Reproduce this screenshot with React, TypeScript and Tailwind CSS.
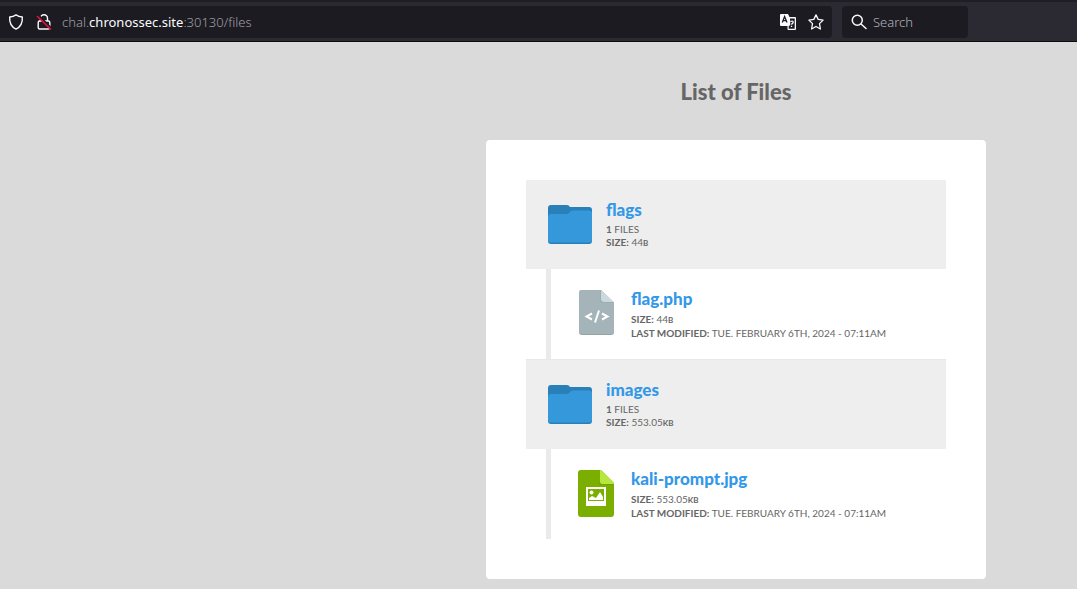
import React from "react";

type Entry = {
  name: string;
  kind: "folder" | "code" | "image";
  size: string;
  unit: string;
  count?: number;
  modified?: string;
};

const entries: Entry[] = [
  { name: "flags", kind: "folder", count: 1, size: "44", unit: "B" },
  { name: "flag.php", kind: "code", size: "44", unit: "B", modified: "Tue. February 6th, 2024 - 07:11am" },
  { name: "images", kind: "folder", count: 1, size: "553.05", unit: "KB" },
  { name: "kali-prompt.jpg", kind: "image", size: "553.05", unit: "KB", modified: "Tue. February 6th, 2024 - 07:11am" },
];

function FolderIcon() {
  return (
    <svg width="44" height="39" viewBox="0 0 44 39" aria-hidden="true">
      <path d="M3 0h16q2 0 3 2h19q3 0 3 3v31q0 3-3 3H3q-3 0-3-3V3q0-3 3-3z" fill="#2980b9" />
      <path d="M3 9h15q3 0 4-2 1-1.500 3-1.500h16q3 0 3 3v26q0 3-3 3H3q-3 0-3-3V12q0-3 3-3z" fill="#3498db" />
    </svg>
  );
}

function CodeIcon() {
  return (
    <svg width="36" height="47" viewBox="0 0 36 47" aria-hidden="true">
      <path d="M3 0h20l13 13v29q0 3-3 3H4q-3 0-3-3V3q0-3 3-3z" fill="#95a5a6" />
      <path d="M4 0h19l13 13v29q0 2-3 2H4q-3 0-3-2V3q0-3 3-3z" fill="#a5b4b9" />
      <path d="M23 0l13 12H26q-3 0-3-3z" fill="#cbd9df" />
      <path d="M23 9q0 3 3 3h10v1H25q-3 0-3-3V0h1z" fill="#95a6ad" opacity=".6" />
      <path d="M14 23.500L8.500 26.500l5.500 3M24 23.500l5.500 3-5.500 3M21 20.500l-4 12" fill="none" stroke="#fff" strokeWidth="2" />
    </svg>
  );
}

function ImageIcon() {
  return (
    <svg width="36" height="47" viewBox="0 0 36 47" aria-hidden="true">
      <path d="M3 0h20l13 13v31q0 3-3 3H3q-3 0-3-3V3q0-3 3-3z" fill="#7aaf00" />
      <path d="M22 0h1l13 13v1H24q-2 0-2-2z" fill="#b5e73c" />
      <path d="M22 12q0 2 2 2h12v1H24q-3 0-3-3z" fill="#659400" opacity=".4" />
      <path fillRule="evenodd" d="M8 17h20v19H8zM10 19v12h16V19z" fill="#fff" />
      <path d="M11 30v-2l3-2 4 2 4-6 3 5v3z" fill="#fff" />
      <circle cx="13.500" cy="22.500" r="2" fill="#fff" />
    </svg>
  );
}

function FileRow({ entry }: { entry: Entry }) {
  const folder = entry.kind === "folder";
  return (
    <li
      className={
        folder
          ? "flex border-t border-[#e8e8e8] bg-[#eeeeee] pb-5 pl-[22px] pt-5 first:border-t-0"
          : "ml-5 flex border-l-[5px] border-[#eaeae8] pb-5 pl-[27px] pt-[21px]"
      }
    >
      <div className={folder ? "w-[58px] shrink-0 pt-[5px]" : "w-[53px] shrink-0"}>
        {folder ? <FolderIcon /> : entry.kind === "code" ? <CodeIcon /> : <ImageIcon />}
      </div>
      <div className={folder ? "h-[49px] pt-px text-[10px] leading-[13px] text-[#666666]" : "h-[49px] text-[10px] leading-[14px] text-[#666666]"}>
        <a href="#" className="mb-1 block text-[17px] leading-[18px] font-black text-[#3498e8]">
          {entry.name}
        </a>
        {entry.count !== undefined && (
          <p className="uppercase">
            <b>{entry.count}</b> Files
          </p>
        )}
        <p className="uppercase">
          <b>Size:</b> {entry.size}
          <b className="text-[8px] leading-none">{entry.unit}</b>
        </p>
        {entry.modified && (
          <p className="uppercase">
            <b>Last modified:</b> {entry.modified}
          </p>
        )}
      </div>
    </li>
  );
}

function Toolbar() {
  return (
    <header className="flex h-[42px] items-center gap-2.5 border-b border-t-2 border-b-[#0c0c0d] border-t-[#1f1e25] bg-[#2b2a33] font-['Noto_Sans',sans-serif] text-[13px] font-light">
      <div className="flex h-8 w-[832px] items-center rounded-r bg-[#1c1b22] pl-2 pr-2">
        <button type="button" aria-label="Tracking protection" className="mr-3">
          <svg width="16" height="16" viewBox="0 0 16 16" fill="none" stroke="#fbfbfe" strokeWidth="1.400" strokeLinejoin="round">
            <path d="M8 .9c2 1.500 4 2 6.300 2.100.4 5.400-1 9.600-6.300 12.100C2.700 12.600 1.300 8.400 1.700 3 4 2.900 6 2.400 8 .9z" />
          </svg>
        </button>
        <button type="button" aria-label="Connection not secure" className="mr-2.5">
          <svg width="16" height="16" viewBox="0 0 16 16" fill="none" stroke="#fbfbfe" strokeWidth="1.400">
            <path d="M4.500 7V4.200a3.500 3.500 0 0 1 7 0V7" />
            <rect x="2.200" y="7" width="11.600" height="8" rx="1.500" />
            <path d="M1.500 1l14 14" stroke="#1c1b22" strokeWidth="3" />
            <path d="M1 2l14 13.500" stroke="#e3123f" strokeWidth="1.600" />
          </svg>
        </button>
        <p className="flex-1 pt-0.5 text-[#a09fa5]">
          chal.<span className="font-normal text-[#fbfbfe]">chronossec.site</span>:30130/files
        </p>
        <button type="button" aria-label="Translate page" className="mr-3">
          <svg width="16" height="16" viewBox="0 0 16 16">
            <path d="M1 0h7l1.500 3H15q1 0 1 1v11q0 1-1 1H8.500q-1 0-1-1v-3H1q-1 0-1-1V1q0-1 1-1z" fill="#fbfbfe" />
            <path d="M2.300 8.500L4.600 2.500l2.400 6M3 6.600h3.200" fill="none" stroke="#1c1b22" strokeWidth="1.300" />
            <path d="M10 4.500h4.700v10.200H8.700V12l1.600-1z" fill="#1c1b22" />
            <path d="M10.300 7.500q3.700-1.200 2.700 1.300l-1.600 1.700M11.500 11.700v1.300" fill="none" stroke="#fbfbfe" strokeWidth="1.300" />
          </svg>
        </button>
        <button type="button" aria-label="Bookmark this page">
          <svg width="16" height="16" viewBox="0 0 16 16" fill="none" stroke="#fbfbfe" strokeWidth="1.300" strokeLinejoin="round">
            <path d="M8 .9l2.200 4.500 4.900.7-3.600 3.500.9 5.400L8 12.500 3.600 15l.9-5.400L.9 6.100l4.900-.7z" />
          </svg>
        </button>
      </div>
      <label className="flex h-8 w-[126px] items-center gap-1.5 rounded bg-[#1c1b22] pl-[9px] pr-2">
        <svg className="shrink-0" width="16" height="16" viewBox="0 0 16 16" fill="none" stroke="#fbfbfe" strokeWidth="1.500" strokeLinecap="round">
          <circle cx="6.300" cy="6.300" r="5" />
          <path d="M10 10l5 4.500" />
        </svg>
        <input type="text" aria-label="Search" placeholder="Search" className="w-full min-w-0 bg-transparent pt-0.5 outline-none placeholder:text-[#b4b3b9]" />
      </label>
    </header>
  );
}

export default function App() {
  return (
    <div className="min-h-screen bg-[#dadada] font-['Lato',sans-serif]">
      <Toolbar />
      <main className="flex flex-col items-center pb-2.5 pl-[395px] pt-[34px]">
        <h1 className="mb-8 text-[22px] leading-8 font-black text-[#666666]">List of Files</h1>
        <ul className="w-full max-w-[500px] rounded bg-white p-10">
          {entries.map((entry) => (
            <FileRow key={entry.name} entry={entry} />
          ))}
        </ul>
      </main>
    </div>
  );
}
